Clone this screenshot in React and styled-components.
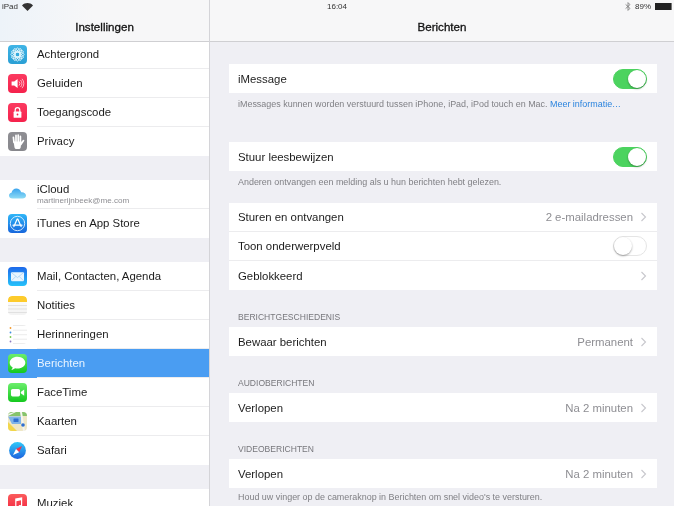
import styled, { createGlobalStyle } from "styled-components";

const GlobalStyle = createGlobalStyle`
    html, body {
        margin: 0;
        padding: 0;
        background: #efeff4;
    }
    * {
        box-sizing: border-box;
    }
`;

function IconBox({ from, to, children }) {
    return (
        <Tile $from={from} $to={to}>
            <svg width="19" height="19" viewBox="0 0 19 19">{children}</svg>
        </Tile>
    );
}

const FlowerIcon = () => (
    <IconBox from="#3fb4e6" to="#2a9fd4">
        <g fill="none" stroke="#eaf8fd" strokeWidth="0.8">
            {[0, 30, 60, 90, 120, 150].map((a) => (
                <ellipse key={a} cx="9.5" cy="9.5" rx="2.3" ry="6.6" transform={`rotate(${a} 9.5 9.5)`} />
            ))}
        </g>
    </IconBox>
);

const SoundIcon = () => (
    <IconBox from="#fb3a60" to="#f5224c">
        <path d="M3.6 7.6h2.6L9.6 5v9L6.2 11.4H3.6z" fill="#fff" />
        <path d="M11 7.4a3 3 0 0 1 0 4.2M12.5 6a5 5 0 0 1 0 7M14 4.8a7 7 0 0 1 0 9.4" fill="none" stroke="#ffd5dd" strokeWidth="0.8" />
    </IconBox>
);

const LockIcon = () => (
    <IconBox from="#fb3a60" to="#f5224c">
        <path d="M7.2 9V7a2.3 2.3 0 0 1 4.6 0V9" fill="none" stroke="#fff" strokeWidth="1.2" />
        <rect x="5.6" y="8.6" width="7.8" height="6.2" rx="0.6" fill="#fff" />
        <circle cx="9.5" cy="11.5" r="0.9" fill="#f5224c" />
    </IconBox>
);

const HandIcon = () => (
    <IconBox from="#8e8e93" to="#87878c">
        <path d="M5.6 9.5h8l-1 6.2c-.3.9-1 1.3-1.9 1.3H8.6c-1 0-1.7-.5-2.1-1.5z" fill="#fff" />
        <path d="M6 10.5L5.4 5.4M8 10V3.4M10.2 10V3M12.4 10.5V4.4M12.8 12.4l2.7-3.8" fill="none" stroke="#fff" strokeWidth="1.7" strokeLinecap="round" />
    </IconBox>
);

const CloudIcon = () => (
    <Tile $from="#fff" $to="#fff">
        <svg width="19" height="19" viewBox="0 0 19 19">
            <defs>
                <linearGradient id="cloud" x1="0" y1="0" x2="0" y2="1">
                    <stop offset="0" stopColor="#3aa4ee" />
                    <stop offset="1" stopColor="#8fdcf5" />
                </linearGradient>
            </defs>
            <path
                d="M4.4 13.6c-2 0-3.4-1.3-3.4-3 0-1.5 1-2.6 2.5-2.9C4 5 6 3.4 8.3 3.4c2.4 0 4.3 1.6 4.9 3.9 2.5-.3 4.8 1 4.8 3.3 0 1.8-1.5 3-3.5 3z"
                fill="url(#cloud)"
            />
        </svg>
    </Tile>
);

const AppStoreIcon = () => (
    <IconBox from="#2fb6f8" to="#1766dc">
        <circle cx="9.5" cy="9.5" r="7.2" fill="none" stroke="#e3f3ff" strokeWidth="0.9" />
        <path d="M9.8 5l3.3 7.6M9.2 5l-3.3 7.6M5 11.2h9" fill="none" stroke="#fff" strokeWidth="1.2" strokeLinecap="round" />
    </IconBox>
);

const MailIcon = () => (
    <IconBox from="#1d68ea" to="#25c2fa">
        <rect x="3" y="5.2" width="13" height="9" rx="1" fill="#e8f5fe" />
        <path d="M3.4 5.6l6.1 5 6.1-5M3.4 13.8l4.4-4.4M15.6 13.8l-4.4-4.4" fill="none" stroke="#8fc6f2" strokeWidth="0.6" />
    </IconBox>
);

const NotesIcon = () => (
    <Tile $from="#fdfdfd" $to="#f3f3f3">
        <svg width="19" height="19" viewBox="0 0 19 19">
            <path d="M0 4a4 4 0 0 1 4-4h11a4 4 0 0 1 4 4v2H0z" fill="#fdcb2c" />
            <path d="M0 9.5h19M0 13h19M0 16.5h19" stroke="#d9d9d9" strokeWidth="0.7" />
        </svg>
    </Tile>
);

const RemindersIcon = () => (
    <Tile $from="#fff" $to="#fff">
        <svg width="19" height="19" viewBox="0 0 19 19">
            <path d="M5 0.5h14M5 5.2h14M5 9.7h14M5 14.2h14M5 18.6h14" stroke="#e2e2e2" strokeWidth="0.7" />
            <circle cx="2.5" cy="3" r="0.9" fill="#f39a2c" />
            <circle cx="2.5" cy="7.5" r="0.9" fill="#3f8fe0" />
            <circle cx="2.5" cy="12" r="0.9" fill="#76c84a" />
            <circle cx="2.5" cy="16.5" r="0.9" fill="#8e7bc0" />
        </svg>
    </Tile>
);

const MessagesIcon = () => (
    <IconBox from="#6cee6c" to="#14c81e">
        <path d="M9.5 2.8c-4.5 0-7.8 2.7-7.8 6 0 2 1.2 3.7 3 4.7-.2 1-.8 1.8-1.4 2.3 1.4 0 2.8-.6 3.8-1.5.7.2 1.5.3 2.4.3 4.5 0 7.8-2.7 7.8-5.8s-3.3-6-7.8-6z" fill="#fff" />
    </IconBox>
);

const FaceTimeIcon = () => (
    <IconBox from="#6cee6c" to="#14c81e">
        <rect x="3" y="6" width="9" height="7.4" rx="1.6" fill="#fff" />
        <path d="M12.8 9.1l3.4-2.5v6.2l-3.4-2.5z" fill="#fff" />
    </IconBox>
);

const MapsIcon = () => (
    <Tile $from="#efe7c6" $to="#efe7c6">
        <svg width="19" height="19" viewBox="0 0 19 19">
            <path d="M0 0h19v4H0z" fill="#86c46c" />
            <path d="M0 10l9 9H0z" fill="#f2d64b" />
            <path d="M12 0l3 19h2L14 0z" fill="#f4f4f0" />
            <path d="M0 4.5h13V12H4z" fill="#7fb4e8" />
            <rect x="5.5" y="6.5" width="5" height="3.5" rx="0.5" fill="#2f6fd0" />
            <circle cx="15" cy="13" r="1.8" fill="#2f6fd0" />
            <path d="M0 2l6-2h2L0 4z" fill="#f4f4f0" />
        </svg>
    </Tile>
);

const SafariIcon = () => (
    <Tile $from="#fff" $to="#fff">
        <svg width="19" height="19" viewBox="0 0 19 19">
            <defs>
                <linearGradient id="safari" x1="0" y1="0" x2="0" y2="1">
                    <stop offset="0" stopColor="#30c8f8" />
                    <stop offset="1" stopColor="#1e62de" />
                </linearGradient>
            </defs>
            <circle cx="9.5" cy="9.5" r="8.4" fill="url(#safari)" />
            <path d="M14 5l-6 3 3.2 3.2z" fill="#f3324a" />
            <path d="M5 14l6.2-2.8L8 8z" fill="#fff" />
        </svg>
    </Tile>
);

const MusicIcon = () => (
    <IconBox from="#fb5c5c" to="#f21f3c">
        <path d="M7.2 4.6l7-1.4v9.6a2 1.7 0 1 1-1.2-1.5V6.2l-4.6 1v7.4a2 1.7 0 1 1-1.2-1.5z" fill="#fff" />
    </IconBox>
);

function Chevron() {
    return (
        <svg width="7" height="10" viewBox="0 0 7 10">
            <path d="M1.5 1l4 4-4 4" fill="none" stroke="#c7c7cc" strokeWidth="1.1" />
        </svg>
    );
}

const sidebarGroups = [
    [
        { label: "Achtergrond", icon: <FlowerIcon /> },
        { label: "Geluiden", icon: <SoundIcon /> },
        { label: "Toegangscode", icon: <LockIcon /> },
        { label: "Privacy", icon: <HandIcon /> },
    ],
    [
        { label: "iCloud", sub: "martinerijnbeek@me.com", icon: <CloudIcon /> },
        { label: "iTunes en App Store", icon: <AppStoreIcon /> },
    ],
    [
        { label: "Mail, Contacten, Agenda", icon: <MailIcon /> },
        { label: "Notities", icon: <NotesIcon /> },
        { label: "Herinneringen", icon: <RemindersIcon /> },
        { label: "Berichten", icon: <MessagesIcon />, active: true },
        { label: "FaceTime", icon: <FaceTimeIcon /> },
        { label: "Kaarten", icon: <MapsIcon /> },
        { label: "Safari", icon: <SafariIcon /> },
    ],
    [{ label: "Muziek", icon: <MusicIcon /> }],
];

function Setting({ label, value, link, toggle }) {
    return (
        <Row>
            <RowLabel>{label}</RowLabel>
            {value && <RowValue>{value}</RowValue>}
            {link && <Chevron />}
            {toggle !== undefined && <Toggle $on={toggle} />}
        </Row>
    );
}

export default function App() {
    return (
        <>
            <GlobalStyle />
            <Page>
                <StatusBar>
                    <StatusSide>
                        iPad
                        <svg width="11" height="8" viewBox="0 0 11 8">
                            <path d="M5.5 8L0 2.4C3.2-.8 7.8-.8 11 2.4z" fill="#333" />
                        </svg>
                    </StatusSide>
                    <span>16:04</span>
                    <StatusSide>
                        <svg width="6" height="9" viewBox="0 0 6 9">
                            <path d="M.6 2.4l4.4 4L3 8.4V.6l2 2-4.4 4" fill="none" stroke="#777" strokeWidth="0.8" />
                        </svg>
                        89%
                        <Battery />
                    </StatusSide>
                </StatusBar>
                <Sidebar>
                    <NavBar $tint>Instellingen</NavBar>
                    <SideList>
                        {sidebarGroups.map((group) => (
                            <SideGroup key={group[0].label}>
                                {group.map((item) => (
                                    <SideRow key={item.label} $active={item.active}>
                                        {item.icon}
                                        <SideText $active={item.active}>
                                            {item.label}
                                            {item.sub && <SideSub>{item.sub}</SideSub>}
                                        </SideText>
                                    </SideRow>
                                ))}
                            </SideGroup>
                        ))}
                    </SideList>
                </Sidebar>
                <Main>
                    <NavBar>Berichten</NavBar>
                    <Content>
                        <Card>
                            <Setting label="iMessage" toggle={true} />
                        </Card>
                        <Footnote $after={27}>
                            iMessages kunnen worden verstuurd tussen iPhone, iPad, iPod touch en Mac.{" "}
                            <MoreLink>Meer informatie…</MoreLink>
                        </Footnote>
                        <Card>
                            <Setting label="Stuur leesbewijzen" toggle={true} />
                        </Card>
                        <Footnote $after={10}>Anderen ontvangen een melding als u hun berichten hebt gelezen.</Footnote>
                        <Card>
                            <Setting label="Sturen en ontvangen" value="2 e-mailadressen" link />
                            <Setting label="Toon onderwerpveld" toggle={false} />
                            <Setting label="Geblokkeerd" link />
                        </Card>
                        <SectionTitle>BERICHTGESCHIEDENIS</SectionTitle>
                        <Card>
                            <Setting label="Bewaar berichten" value="Permanent" link />
                        </Card>
                        <SectionTitle>AUDIOBERICHTEN</SectionTitle>
                        <Card>
                            <Setting label="Verlopen" value="Na 2 minuten" link />
                        </Card>
                        <SectionTitle>VIDEOBERICHTEN</SectionTitle>
                        <Card>
                            <Setting label="Verlopen" value="Na 2 minuten" link />
                        </Card>
                        <Footnote $tight>Houd uw vinger op de cameraknop in Berichten om snel video's te versturen.</Footnote>
                    </Content>
                </Main>
            </Page>
        </>
    );
}

const Page = styled.div`
    position: relative;
    display: flex;
    width: 674px;
    height: 506px;
    overflow: hidden;
    background-color: #efeff4;
    font-family: "Liberation Sans", Arial, sans-serif;
    color: #1c1c1c;
    filter: blur(0.3px);
`;

const StatusBar = styled.div`
    position: absolute;
    z-index: 2;
    top: 0;
    left: 0;
    right: 0;
    height: 13px;
    padding: 0 2px;
    display: flex;
    justify-content: space-between;
    align-items: center;
    font-size: 8px;
    color: #333;
`;

const StatusSide = styled.div`
    display: flex;
    align-items: center;
    gap: 4px;
    width: 60px;
    &:last-child {
        justify-content: flex-end;
    }
`;

const Battery = styled.div`
    width: 17px;
    height: 7px;
    background-color: #222;
    border-right: 1px solid #777;
`;

const Sidebar = styled.div`
    width: 210px;
    flex-shrink: 0;
    border-right: 1px solid #d4d4d8;
    display: flex;
    flex-direction: column;
    overflow: hidden;
`;

const NavBar = styled.div`
    position: relative;
    z-index: 1;
    height: 42px;
    flex-shrink: 0;
    padding-top: 12px;
    display: flex;
    align-items: center;
    justify-content: center;
    font-size: 11.6px;
    -webkit-text-stroke: 0.3px #111;
    color: #111;
    background: ${(p) => (p.$tint ? "linear-gradient(90deg, #edf3f9 0, #f7f7f8 45%)" : "#f7f7f8")};
    border-bottom: 1px solid #cfcfd2;
`;

const SideList = styled.div`
    margin-top: -2px;
    display: flex;
    flex-direction: column;
    gap: 24px;
`;

const SideGroup = styled.div`
    background-color: #fff;
    display: flex;
    flex-direction: column;
`;

const SideRow = styled.div`
    height: 29px;
    flex-shrink: 0;
    padding-left: 8px;
    display: flex;
    align-items: center;
    gap: 10px;
    background-color: ${(p) => (p.$active ? "#4a9df2" : "transparent")};
`;

const SideText = styled.div`
    flex: 1;
    height: 100%;
    display: flex;
    flex-direction: column;
    justify-content: center;
    font-size: 11.4px;
    line-height: 13px;
    color: ${(p) => (p.$active ? "#e9f4ff" : "#1c1c1c")};
    ${SideRow}:not(:last-child) > & {
        border-bottom: 1px solid #ececee;
    }
`;

const SideSub = styled.span`
    font-size: 8.1px;
    line-height: 10px;
    color: #8e8e93;
`;

const Tile = styled.div`
    width: 19px;
    height: 19px;
    flex-shrink: 0;
    overflow: hidden;
    border-radius: 4px;
    background: linear-gradient(${(p) => p.$from}, ${(p) => p.$to});
    svg {
        display: block;
    }
`;

const Main = styled.div`
    flex: 1;
    display: flex;
    flex-direction: column;
    overflow: hidden;
`;

const Content = styled.div`
    padding: 22px 17px 0 19px;
    display: flex;
    flex-direction: column;
`;

const Card = styled.div`
    background-color: #fff;
    display: flex;
    flex-direction: column;
`;

const Row = styled.div`
    height: 29px;
    flex-shrink: 0;
    padding: 0 10px 0 9px;
    display: flex;
    align-items: center;
    font-size: 11.4px;
    color: #1c1c1c;
    &:not(:last-child) {
        border-bottom: 1px solid #ececee;
    }
`;

const RowLabel = styled.span`
    flex: 1;
`;

const RowValue = styled.span`
    color: #8e8e93;
    margin-right: 7px;
`;

const Toggle = styled.div`
    position: relative;
    width: 34px;
    height: 20px;
    border-radius: 10px;
    background-color: ${(p) => (p.$on ? "#4cd35f" : "#fff")};
    border: 1px solid ${(p) => (p.$on ? "#4cd35f" : "#e5e5e5")};
    &::after {
        content: "";
        position: absolute;
        top: 0;
        left: ${(p) => (p.$on ? "14px" : "0")};
        width: 18px;
        height: 18px;
        border-radius: 50%;
        background-color: #fff;
        box-shadow: 0 1px 2px rgba(0, 0, 0, 0.35);
    }
`;

const Footnote = styled.div`
    padding: ${(p) => (p.$tight ? "4px" : "6px")} 9px 0;
    height: 22px;
    margin-bottom: ${(p) => p.$after || 0}px;
    font-size: 8.95px;
    line-height: 11px;
    color: #808085;
    white-space: nowrap;
`;

const MoreLink = styled.span`
    color: #2b84de;
`;

const SectionTitle = styled.div`
    height: 37px;
    padding: 0 9px 5px;
    display: flex;
    align-items: flex-end;
    font-size: 8.55px;
    color: #77777c;
`;
